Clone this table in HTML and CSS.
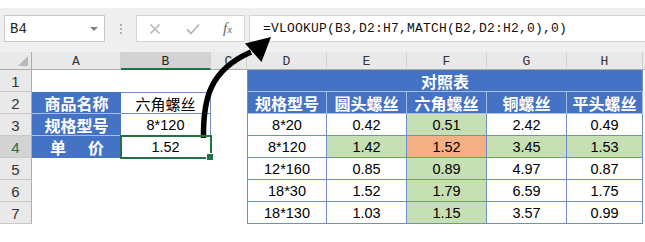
FILE: index.html
```html
<!DOCTYPE html>
<html>
<head>
<meta charset="utf-8">
<link rel="stylesheet" href="styles.css">
</head>
<body>
<div class="app">
  <div class="topgap"></div>
  <div class="fbar">
    <div class="namebox"><span class="ref">B4</span><span class="dd"></span></div>
    <div class="grip"><i></i><i></i><i></i></div>
    <div class="fxbox">
      <svg class="ic" width="12" height="12" viewBox="0 0 12 12"><path d="M1.5 1.5 L10.5 10.5 M10.5 1.5 L1.5 10.5" stroke="#b8b8b8" stroke-width="1.6" fill="none"/></svg>
      <svg class="ic" width="14" height="12" viewBox="0 0 14 12"><path d="M1 6.5 L5 10.5 L13 1.5" stroke="#b8b8b8" stroke-width="1.8" fill="none"/></svg>
      <span class="fx">f<span class="fxs">x</span></span>
    </div>
    <div class="formula">=VLOOKUP(B3,D2:H7,MATCH(B2,D2:H2,0),0)</div>
  </div>
  <div class="sheet">
    <div class="ch corner"><span class="tri"></span></div>
    <div class="ch">A</div>
    <div class="ch sel">B</div>
    <div class="ch">C</div>
    <div class="ch">D</div>
    <div class="ch">E</div>
    <div class="ch">F</div>
    <div class="ch">G</div>
    <div class="ch">H</div>
    <div class="ch fill"></div>

    <div class="rh">1</div>
    <div class="c"></div><div class="c"></div><div class="c"></div>
    <div class="t blue title span5">对照表</div>
    <div class="c"></div>

    <div class="rh">2</div>
    <div class="c la top">商品名称</div>
    <div class="c lb top">六角螺丝</div>
    <div class="c"></div>
    <div class="t blue first">规格型号</div>
    <div class="t blue">圆头螺丝</div>
    <div class="t blue">六角螺丝</div>
    <div class="t blue">铜螺丝</div>
    <div class="t blue">平头螺丝</div>
    <div class="c"></div>

    <div class="rh">3</div>
    <div class="c la">规格型号</div>
    <div class="c lb num">8*120</div>
    <div class="c"></div>
    <div class="t num first">8*20</div>
    <div class="t num">0.42</div>
    <div class="t num green">0.51</div>
    <div class="t num">2.42</div>
    <div class="t num">0.49</div>
    <div class="c"></div>

    <div class="rh rsel">4</div>
    <div class="c la dist"><span>单</span><span>价</span></div>
    <div class="c lb num selcell">1.52</div>
    <div class="c"></div>
    <div class="t num first">8*120</div>
    <div class="t num green">1.42</div>
    <div class="t num orange">1.52</div>
    <div class="t num green">3.45</div>
    <div class="t num green">1.53</div>
    <div class="c"></div>

    <div class="rh">5</div>
    <div class="c"></div><div class="c"></div><div class="c"></div>
    <div class="t num first">12*160</div>
    <div class="t num">0.85</div>
    <div class="t num green">0.89</div>
    <div class="t num">4.97</div>
    <div class="t num">0.87</div>
    <div class="c"></div>

    <div class="rh">6</div>
    <div class="c"></div><div class="c"></div><div class="c"></div>
    <div class="t num first">18*30</div>
    <div class="t num">1.52</div>
    <div class="t num green">1.79</div>
    <div class="t num">6.59</div>
    <div class="t num">1.75</div>
    <div class="c"></div>

    <div class="rh">7</div>
    <div class="c"></div><div class="c"></div><div class="c"></div>
    <div class="t num first">18*130</div>
    <div class="t num">1.03</div>
    <div class="t num green">1.15</div>
    <div class="t num">3.57</div>
    <div class="t num">0.99</div>
    <div class="c"></div>
  </div>
  <svg class="arrow" width="645" height="242" viewBox="0 0 645 242">
    <path d="M203.5 138 C203 98 210 70 251 52" stroke="#000" stroke-width="5.5" fill="none"/>
    <polygon points="271,37 245,43.5 261.5,62" fill="#000"/>
  </svg>
</div>
</body>
</html>
```

FILE: styles.css
```css
* { box-sizing: border-box; margin: 0; padding: 0; }
body { width: 645px; height: 242px; overflow: hidden; background: #fff; font-family: "Liberation Sans", Arial, sans-serif; }
.app { position: relative; width: 645px; height: 242px; }
.topgap { height: 8px; background: #fff; }
.fbar { height: 44px; background: #efefef; display: flex; align-items: flex-start; padding-top: 7px; }
.namebox { margin-left: 4px; width: 101px; height: 27px; background: #fff; border: 1px solid #c8c8c8; display: flex; align-items: center; justify-content: space-between; padding: 0 6px 0 5px; }
.ref { font-family: "Liberation Mono", monospace; font-size: 14px; color: #222; }
.dd { width: 0; height: 0; border-left: 4px solid transparent; border-right: 4px solid transparent; border-top: 4px solid #808080; }
.grip { width: 31px; height: 27px; display: flex; flex-direction: column; align-items: center; justify-content: center; gap: 2px; }
.grip i { display: block; width: 2px; height: 2px; background: #b0b0b0; }
.fxbox { width: 109px; height: 27px; background: #fff; border: 1px solid #d4d4d4; display: flex; align-items: center; padding-left: 12px; gap: 0; }
.fxbox .ic:nth-child(1) { margin-right: 25px; }
.fxbox .ic:nth-child(2) { margin-right: 23px; }
.fx { font-family: "Liberation Serif", serif; font-style: italic; font-size: 15px; color: #666; }
.fxs { font-size: 11px; }
.formula { margin-left: 4px; flex: 1; height: 27px; background: #fff; border: 1px solid #d4d4d4; border-right: none; font-family: "Liberation Mono", monospace; font-size: 13px; letter-spacing: 0.2px; line-height: 25px; padding-left: 13px; color: #111; white-space: nowrap; }

.sheet { display: grid; grid-template-columns: 32px 89px 90px 36px 80px 80px 80px 80px 76px 2px; grid-template-rows: 18px repeat(7, 22px); }
.ch { background: #e9e9e9; border-right: 1px solid #d0d0d0; border-bottom: 1px solid #ababab; font-family: "Liberation Mono", monospace; font-size: 13px; color: #333; display: flex; align-items: center; justify-content: center; padding-top: 2px; }
.ch.corner { position: relative; border-right: 1px solid #ababab; }
.tri { position: absolute; right: 3px; bottom: 3px; width: 0; height: 0; border-left: 10px solid transparent; border-bottom: 10px solid #b9b9b9; }
.ch.sel { background: #d3d3d3; border-bottom: 2px solid #217346; color: #222; }
.ch.fill { border-right: none; }
.rh { background: #e9e9e9; border-right: 1px solid #ababab; border-bottom: 1px solid #c9c9c9; font-size: 15px; color: #333; display: flex; align-items: center; justify-content: center; padding-top: 2px; }
.rh.rsel { background: #d3d3d3; color: #217346; }

.c, .t { display: flex; align-items: center; justify-content: center; font-size: 15px; color: #000; white-space: nowrap; }
.num { font-family: "Liberation Sans", Arial, sans-serif; font-size: 14.5px; padding-top: 1px; }
.la { background: #4472c4; color: #fff; font-family: "Noto Sans CJK SC", sans-serif; font-weight: bold; font-size: 16px; border-bottom: 1px solid #a8bde6; }
.lb { border-right: 1px solid #6f8ec9; border-bottom: 1px solid #6f8ec9; font-family: "Noto Sans CJK SC", sans-serif; }
.lb.num { font-family: "Liberation Sans", Arial, sans-serif; }
.top { border-top: 1px solid #6f8ec9; }
.la.top { border-top: none; }
.dist { justify-content: space-between; padding: 0 17px 0 18px; border-bottom: none; }
.selcell { position: relative; outline: 2px solid #217346; outline-offset: -1px; z-index: 1; }
.selcell::after { content: ""; position: absolute; right: -4px; bottom: -4px; width: 6px; height: 6px; background: #217346; border: 1px solid #fff; }

.t { border-right: 1px solid #6f8ec9; border-bottom: 1px solid #6f8ec9; }
.t.first { border-left: 1px solid #6f8ec9; }
.blue { background: #4472c4; color: #fff; font-family: "Noto Sans CJK SC", sans-serif; font-weight: bold; font-size: 16px; border-right-color: #a8bde6; border-bottom-color: #a8bde6; }
.blue.first { border-left-color: #6f8ec9; }
.title { border-left: 1px solid #6f8ec9; border-right-color: #6f8ec9; }
.span5 { grid-column: span 5; }
.green { background: #c6e0b4; }
.orange { background: #f4b084; }
.arrow { position: absolute; left: 0; top: 0; pointer-events: none; }
```
